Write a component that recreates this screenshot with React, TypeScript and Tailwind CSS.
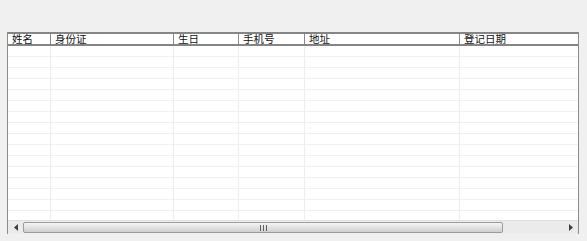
import React from 'react';

const COLUMNS = [
  { title: '姓名', width: 42 },
  { title: '身份证', width: 123 },
  { title: '生日', width: 65 },
  { title: '手机号', width: 66 },
  { title: '地址', width: 155 },
  { title: '登记日期', width: 118 },
];

const ROWS = Array.from({ length: 16 });

const App: React.FC = () => {
  return (
    <div
      className="w-[587px] h-[241px] bg-[#f0f0f0] pt-[32px] pl-[7px] overflow-hidden"
      style={{ fontFamily: '"Noto Sans CJK SC", "Noto Sans", sans-serif' }}
    >
      <div className="w-[572px] h-[202px] bg-white border-l border-r border-[#8c8c8c] flex flex-col">
        {/* header */}
        <div className="flex h-[14px] border-t-2 border-b-2 border-[#858585] bg-white">
          {COLUMNS.map((c, i) => (
            <div
              key={c.title}
              className={`h-full flex items-center pl-[4px] pt-[1px] text-[10.5px] leading-none text-[#111] ${i > 0 ? 'border-l border-[#8a8a8a]' : ''}`}
              style={{ width: c.width }}
            >
              {c.title}
            </div>
          ))}
        </div>
        {/* body */}
        <div className="flex-1 overflow-hidden">
          {ROWS.map((_, r) => (
            <div key={r} className="flex h-[11px] border-b border-[#f0f0f0]">
              {COLUMNS.map((c, i) => (
                <div
                  key={c.title}
                  className={`h-full ${i > 0 ? 'border-l border-[#ededed]' : ''}`}
                  style={{ width: c.width }}
                />
              ))}
            </div>
          ))}
        </div>
        {/* horizontal scrollbar */}
        <div className="h-[14px] flex items-stretch bg-[#ebebeb] border-t border-[#e0e0e0]">
          <div className="w-[15px] flex items-center justify-center">
            <svg width="4" height="7" viewBox="0 0 4 7">
              <path d="M4 0 L0 3.5 L4 7 Z" fill="#404040" />
            </svg>
          </div>
          <div className="w-[480px] my-[1px] rounded-[2px] border border-[#9c9c9c] bg-gradient-to-b from-[#f4f4f4] via-[#e2e2e2] to-[#cfcfcf] flex items-center justify-center">
            <svg width="7" height="6" viewBox="0 0 7 6">
              <path d="M0.5 0 V6 M3.5 0 V6 M6.5 0 V6" stroke="#606060" strokeWidth="1" />
            </svg>
          </div>
          <div className="flex-1" />
          <div className="w-[15px] flex items-center justify-center">
            <svg width="4" height="7" viewBox="0 0 4 7">
              <path d="M0 0 L4 3.5 L0 7 Z" fill="#404040" />
            </svg>
          </div>
        </div>
      </div>
    </div>
  );
};

export default App;
